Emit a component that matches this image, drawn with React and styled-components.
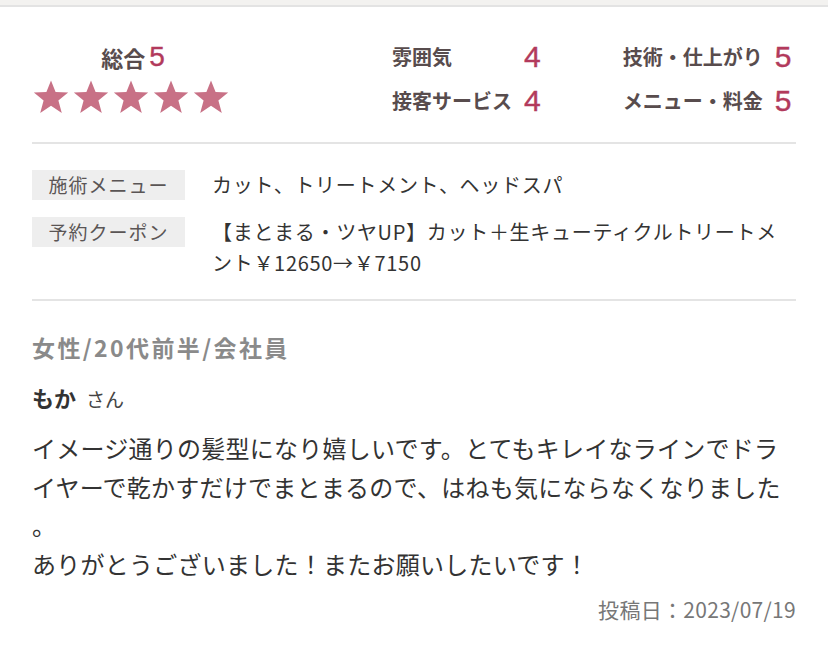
import React from "react";
import styled, { createGlobalStyle } from "styled-components";

const Global = createGlobalStyle`
  html, body { margin: 0; padding: 0; background: #fff; }
  body { font-family: "Liberation Sans", "Noto Sans CJK JP", sans-serif; color: #333; }
`;

const Page = styled.div`
  width: 828px;
  background: #fff;
`;

const TopBand = styled.div`
  height: 5px;
  background: #f3f2f0;
  border-bottom: 2px solid #e3e3e3;
`;

const Card = styled.div`
  padding: 0 32px;
`;

const Section = styled.section`
  padding: ${(p) => p.$pad};
  border-bottom: ${(p) => (p.$divider ? "2px solid #e4e4e4" : "none")};
`;

const RatingRow = styled.div`
  display: flex;
  align-items: flex-start;
`;

const Overall = styled.div`
  width: 202px;
  display: flex;
  flex-direction: column;
  align-items: center;
`;

const OverallTitle = styled.div`
  display: flex;
  align-items: center;
  height: 30px;
  gap: 4px;
`;

const Label = styled.span`
  font-family: "Noto Sans CJK JP", sans-serif;
  font-weight: 700;
  font-size: ${(p) => p.$size || 20}px;
  color: #584c4d;
  line-height: 30px;
`;

const Score = styled.span`
  font-family: "Liberation Sans", sans-serif;
  font-size: ${(p) => p.$size || 30}px;
  color: #b23a5c;
  line-height: 30px;
  -webkit-text-stroke: 0.4px #b23a5c;
`;

const Stars = styled.div`
  display: flex;
  gap: 4px;
  margin-top: 8px;
  margin-left: -4px;
`;

const Scores = styled.div`
  display: flex;
  margin-left: 158px;
  gap: 82px;
`;

const ScoreCol = styled.div`
  display: grid;
  grid-template-columns: auto auto;
  column-gap: 12px;
  row-gap: 14px;
  align-items: center;
`;

const InfoRow = styled.div`
  display: grid;
  grid-template-columns: 153px 1fr;
  column-gap: 27px;
  align-items: start;
  & + & { margin-top: 17px; }
`;

const Tag = styled.div`
  background: #eeeeee;
  height: 30px;
  line-height: 30px;
  text-align: center;
  font-family: "Noto Sans CJK JP", sans-serif;
  font-size: 19px;
  letter-spacing: 1px;
  color: #5a5555;
`;

const InfoValue = styled.div`
  font-family: "Noto Sans CJK JP", sans-serif;
  font-size: 20px;
  letter-spacing: 0.7px;
  line-height: 31px;
  color: #333;
  margin-top: -1px;
  line-break: anywhere;
  word-break: break-all;
`;

const Meta = styled.div`
  font-family: "Noto Sans CJK JP", sans-serif;
  font-weight: 700;
  font-size: 23px;
  letter-spacing: 2.4px;
  line-height: 30px;
  color: #8a8a8a;
`;

const Name = styled.div`
  margin-top: 20px;
  line-height: 30px;
  display: flex;
  align-items: baseline;
  gap: 10px;
`;

const NameMain = styled.span`
  font-family: "Noto Sans CJK JP", sans-serif;
  font-weight: 700;
  font-size: 22px;
  color: #333;
`;

const NameSuffix = styled.span`
  font-family: "Noto Sans CJK JP", sans-serif;
  font-size: 19px;
  color: #444;
`;

const Body = styled.p`
  margin: 15px 0 0;
  font-family: "Noto Sans CJK JP", sans-serif;
  font-size: 24px;
  letter-spacing: 0.25px;
  line-height: 38.5px;
  color: #333;
  line-break: anywhere;
  word-break: break-all;
`;

const DateLine = styled.div`
  margin-top: 13px;
  text-align: right;
  font-family: "Noto Sans CJK JP", sans-serif;
  font-size: 21px;
  letter-spacing: 0.3px;
  line-height: 26px;
  color: #777;
`;

const Star = () => (
  <svg width="36" height="34" viewBox="0 0 24 23" aria-hidden="true">
    <polygon
      points="12,0.4 15.1,8.2 23.6,8.5 17,13.9 19.3,22.3 12,17.5 4.7,22.3 7,13.9 0.4,8.5 8.9,8.2"
      fill="#c87186"
    />
  </svg>
);

const scores = [
  [
    ["雰囲気", "4"],
    ["接客サービス", "4"],
  ],
  [
    ["技術・仕上がり", "5"],
    ["メニュー・料金", "5"],
  ],
];

export default function App() {
  return (
    <Page>
      <Global />
      <TopBand />
      <Card>
        <Section $pad="35px 0 26px" $divider>
          <RatingRow>
            <Overall>
              <OverallTitle>
                <Label $size={22}>総合</Label>
                <Score $size={28}>5</Score>
              </OverallTitle>
              <Stars>
                {[0, 1, 2, 3, 4].map((i) => (
                  <Star key={i} />
                ))}
              </Stars>
            </Overall>
            <Scores>
              {scores.map((col, ci) => (
                <ScoreCol key={ci}>
                  {col.map(([l, v]) => (
                    <React.Fragment key={l}>
                      <Label>{l}</Label>
                      <Score>{v}</Score>
                    </React.Fragment>
                  ))}
                </ScoreCol>
              ))}
            </Scores>
          </RatingRow>
        </Section>
        <Section $pad="26px 0 21px" $divider>
          <InfoRow>
            <Tag>施術メニュー</Tag>
            <InfoValue>カット、トリートメント、ヘッドスパ</InfoValue>
          </InfoRow>
          <InfoRow>
            <Tag>予約クーポン</Tag>
            <InfoValue>
              【まとまる・ツヤUP】カット＋生キューティクルトリートメント￥12650→￥7150
            </InfoValue>
          </InfoRow>
        </Section>
        <Section $pad="31px 0 20px">
          <Meta>女性/20代前半/会社員</Meta>
          <Name>
            <NameMain>もか</NameMain>
            <NameSuffix>さん</NameSuffix>
          </Name>
          <Body>
            イメージ通りの髪型になり嬉しいです。とてもキレイなラインでドライヤーで乾かすだけでまとまるので、はねも気にならなくなりました。
            <br />
            ありがとうございました！またお願いしたいです！
          </Body>
          <DateLine>投稿日：2023/07/19</DateLine>
        </Section>
      </Card>
    </Page>
  );
}
